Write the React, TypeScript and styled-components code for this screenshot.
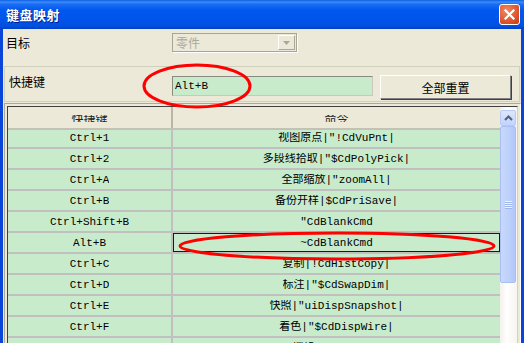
import React from 'react'
import styled, { createGlobalStyle } from 'styled-components'

const CJK = `"Noto Sans CJK SC", "Liberation Sans", sans-serif`
const MONO = `"Liberation Mono", "Noto Sans CJK SC", monospace`

const GlobalStyle = createGlobalStyle`
  html, body {
    margin: 0;
    padding: 0;
  }
  body {
    width: 524px;
    height: 343px;
    overflow: hidden;
    background: #ece9d8;
  }
`

const Window = styled.div`
  position: relative;
  width: 524px;
  height: 343px;
  overflow: hidden;
  display: flex;
  flex-direction: column;
  background: #ece9d8;
  font-family: ${CJK};
  font-size: 12px;
  color: #000;
`

const TitleBar = styled.div`
  height: 29px;
  flex-shrink: 0;
  display: flex;
  align-items: center;
  justify-content: space-between;
  padding: 0 4px 0 6px;
  background: linear-gradient(
    to bottom,
    #0a5fe6 0%,
    #3f8cf7 7%,
    #1a6ff4 14%,
    #0058ee 35%,
    #0054ea 70%,
    #0050e0 90%,
    #003fc4 100%
  );

  h1 {
    margin: 0;
    font-size: 13px;
    font-weight: 700;
    color: #fff;
    text-shadow: 1px 1px 0 #0a1c8c;
    letter-spacing: 0.5px;
  }
`

const CloseButton = styled.button`
  width: 21px;
  height: 21px;
  padding: 0;
  border: 1px solid #fff;
  border-radius: 3px;
  background: radial-gradient(circle at 35% 30%, #f08a66 0%, #e2582f 55%, #c43d14 100%);
  display: flex;
  align-items: center;
  justify-content: center;
`

const Frame = styled.div`
  flex: 1;
  display: flex;
  flex-direction: column;
  border-left: 3px solid #0845d8;
  border-right: 3px solid #0845d8;
  min-height: 0;
`

const TargetRow = styled.div`
  height: 37px;
  flex-shrink: 0;
  display: flex;
  align-items: flex-start;
  padding: 3px 0 0 3px;
  box-sizing: border-box;
`

const Label = styled.span<{ $width: number; $top?: number }>`
  width: ${(p) => p.$width}px;
  flex-shrink: 0;
  margin-top: ${(p) => p.$top ?? 0}px;
  line-height: 17px;
`

const Select = styled.div`
  width: 125px;
  height: 19px;
  margin-top: 1px;
  box-sizing: border-box;
  border: 1px solid #a7a594;
  box-shadow: 1px 1px 0 #fff;
  background: #ece9d8;
  display: flex;
  align-items: center;
  padding: 1px;
  color: #aca899;

  span {
    flex: 1;
    padding-left: 2px;
    line-height: 15px;
  }
`

const SelectArrow = styled.i`
  width: 17px;
  height: 15px;
  box-sizing: border-box;
  background: #ece9d8;
  border: 1px solid;
  border-color: #fff #aca899 #aca899 #fff;
  display: flex;
  align-items: center;
  justify-content: center;
`

const Group = styled.div`
  height: 36px;
  flex-shrink: 0;
  margin: 0 1px;
  box-sizing: border-box;
  border: 1px solid #d0d0bf;
  display: flex;
  align-items: flex-start;
  padding-left: 4px;
`

const KeyInput = styled.div`
  width: 201px;
  height: 20px;
  margin-top: 9px;
  box-sizing: border-box;
  border: 1px solid;
  border-color: #8a8a80 #c8c8c0 #c8c8c0 #8a8a80;
  background: #c8ebcc;
  font-family: ${MONO};
  font-size: 11px;
  line-height: 18px;
  padding-left: 2px;
`

const ResetButton = styled.button`
  width: 131px;
  height: 24px;
  margin: 8px 0 0 7px;
  box-sizing: border-box;
  border: 1px solid;
  border-color: #fff #808080 #808080 #fff;
  box-shadow: 1px 1px 0 #404040;
  background: #ece9d8;
  font-family: ${CJK};
  font-size: 12px;
  color: #000;
  padding: 0;
`

const TableOuter = styled.div`
  flex: 1;
  margin: 1px 0 0 1px;
  width: 517px;
  box-sizing: border-box;
  border: 1px solid;
  border-color: #aca899 #fff #fff #aca899;
  border-bottom: none;
  padding: 2px 2px 0 2px;
  min-height: 0;
  display: flex;
`

const TableInner = styled.div`
  flex: 1;
  display: flex;
  border: 1px solid;
  border-color: #404040 #d4d0c8 #d4d0c8 #404040;
  border-bottom: none;
  min-height: 0;
  overflow: hidden;
`

const Grid = styled.div`
  width: 492px;
  display: grid;
  grid-template-columns: 165px 327px;
  grid-auto-rows: 21px;
  align-content: start;
  background: #c8ebcc;
`

const HeadCell = styled.div<{ $first?: boolean }>`
  height: 23px;
  box-sizing: border-box;
  background: #ece9d8;
  border-bottom: 2px solid #c4c2b5;
  border-right: ${(p) => (p.$first ? '2px solid #b8b6a8' : 'none')};
  display: flex;
  justify-content: center;
  padding-top: 8px;

  span {
    display: block;
    height: 7px;
    line-height: 7px;
    overflow: hidden;
    color: #222;
  }
`

const Cell = styled.div<{ $first?: boolean; $selected?: boolean }>`
  box-sizing: border-box;
  height: 21px;
  border-bottom: 2px solid #c0c0c0;
  border-right: ${(p) => (p.$first ? '2px solid #c0c0c0' : 'none')};
  box-shadow: ${(p) => (p.$selected ? 'inset 0 0 0 1px #1a1a1a' : 'none')};
  display: flex;
  justify-content: center;
  padding-top: 4px;
  font-family: ${MONO};
  font-size: 11px;
  white-space: pre;

  span {
    display: block;
    height: 11px;
    line-height: 12px;
    overflow: hidden;
  }
`

const Scrollbar = styled.div`
  width: 17px;
  flex-shrink: 0;
  padding: 3px 1px 0 0;
  box-sizing: border-box;
  background: linear-gradient(to right, #f3f1ea, #fefefe 40%, #f6f5f0);
  display: flex;
  flex-direction: column;
`

const ScrollUp = styled.div`
  height: 16px;
  box-sizing: border-box;
  border: 1px solid #b9cbf5;
  border-radius: 2px;
  background: linear-gradient(to bottom, #dde6fd, #c3d3fb);
  display: flex;
  align-items: center;
  justify-content: center;
`

const Thumb = styled.div`
  height: 157px;
  box-sizing: border-box;
  border: 1px solid #a9bff2;
  border-radius: 2px;
  background: linear-gradient(to right, #c9d8fc, #bcd0fb 60%, #b2c7f8);
  display: flex;
  flex-direction: column;
  align-items: center;
  justify-content: center;
  gap: 1px;

  i {
    display: block;
    width: 7px;
    height: 1px;
    background: #eef3fe;
    box-shadow: 0 1px 0 #9fb5ee;
  }
`

const Overlay = styled.svg`
  position: absolute;
  left: 0;
  top: 0;
  pointer-events: none;
`

const rows: [string, string][] = [
  ['Ctrl+1', '视图原点|"!CdVuPnt|'],
  ['Ctrl+2', '多段线拾取|"$CdPolyPick|'],
  ['Ctrl+A', '全部缩放|"zoomAll|'],
  ['Ctrl+B', '备份开样|$CdPriSave|'],
  ['Ctrl+Shift+B', '"CdBlankCmd'],
  ['Alt+B', '~CdBlankCmd'],
  ['Ctrl+C', '复制|!CdHistCopy|'],
  ['Ctrl+D', '标注|"$CdSwapDim|'],
  ['Ctrl+E', '快照|"uiDispSnapshot|'],
  ['Ctrl+F', '着色|"$CdDispWire|'],
  ['Ctrl+G', '栅格|"$CdGrid|'],
]

export default function App() {
  return (
    <>
      <GlobalStyle />
      <Window>
        <TitleBar>
          <h1>键盘映射</h1>
          <CloseButton>
            <svg width="11" height="11" viewBox="0 0 11 11">
              <path d="M1.5 1.5 L9.5 9.5 M9.5 1.5 L1.5 9.5" stroke="#fff" strokeWidth="2.2" strokeLinecap="square" />
            </svg>
          </CloseButton>
        </TitleBar>
        <Frame>
          <TargetRow>
            <Label $width={166} $top={2}>目标</Label>
            <Select>
              <span>零件</span>
              <SelectArrow>
                <svg width="7" height="4" viewBox="0 0 7 4">
                  <path d="M0 0 H7 L3.5 4 Z" fill="#aca899" />
                </svg>
              </SelectArrow>
            </Select>
          </TargetRow>
          <Group>
            <Label $width={163} $top={6}>快捷键</Label>
            <KeyInput>Alt+B</KeyInput>
            <ResetButton>全部重置</ResetButton>
          </Group>
          <TableOuter>
            <TableInner>
              <Grid>
                <HeadCell $first>
                  <span>快捷键</span>
                </HeadCell>
                <HeadCell>
                  <span>命令</span>
                </HeadCell>
                {rows.map(([key, cmd]) => (
                  <React.Fragment key={key}>
                    <Cell $first>
                      <span>{key}</span>
                    </Cell>
                    <Cell $selected={key === 'Alt+B'}>
                      <span>{cmd}</span>
                    </Cell>
                  </React.Fragment>
                ))}
              </Grid>
              <Scrollbar>
                <ScrollUp>
                  <svg width="9" height="6" viewBox="0 0 9 6">
                    <path d="M1 5 L4.5 1.5 L8 5" stroke="#4d6185" strokeWidth="2" fill="none" />
                  </svg>
                </ScrollUp>
                <Thumb>
                  <i />
                  <i />
                  <i />
                  <i />
                </Thumb>
              </Scrollbar>
            </TableInner>
          </TableOuter>
        </Frame>
        <Overlay width="524" height="343" viewBox="0 0 524 343">
          <ellipse cx="197" cy="86" rx="53" ry="21" fill="none" stroke="#f00" strokeWidth="3" />
          <ellipse cx="337" cy="246" rx="157" ry="13" fill="none" stroke="#f00" strokeWidth="3" />
        </Overlay>
      </Window>
    </>
  )
}
